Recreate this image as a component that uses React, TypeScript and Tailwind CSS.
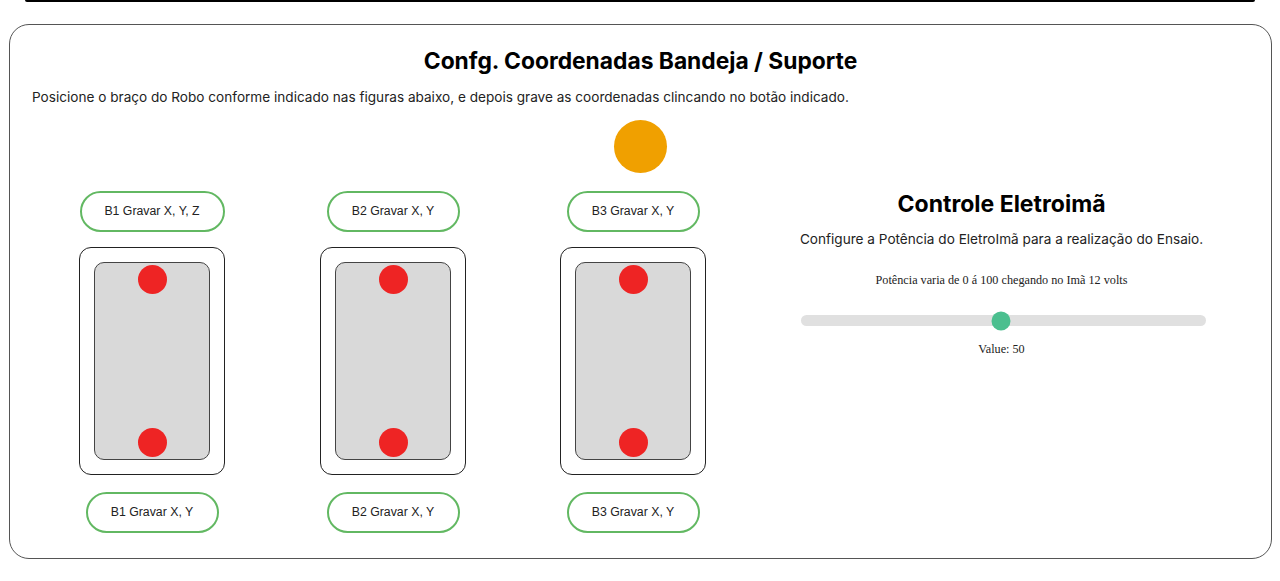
import React from 'react'

const sans = { fontFamily: 'Inter, "Noto Sans", sans-serif' }

function GravarButton({ label, wide }: { label: string; wide?: boolean }) {
  return (
    <button
      className={`${wide ? 'w-[145px]' : 'w-[133px]'} h-[41px] rounded-full border-2 border-[#62b862] bg-white text-[12.3px] text-[#222] font-['Liberation_Sans',Arial,sans-serif]`}
    >
      {label}
    </button>
  )
}

function Bandeja() {
  return (
    <div className="w-[146px] h-[228px] rounded-[12px] border border-[#222] p-[14px]">
      <div className="w-full h-full rounded-[10px] border border-[#444] bg-[#d9d9d9] flex flex-col items-center justify-between py-[2px]">
        <div className="w-[29px] h-[29px] rounded-full bg-[#ee2424]" />
        <div className="w-[29px] h-[29px] rounded-full bg-[#ee2424]" />
      </div>
    </div>
  )
}

function Coluna({ n, wideTop }: { n: number; wideTop?: boolean }) {
  return (
    <div className="w-[240px] flex flex-col items-center">
      <GravarButton label={`B${n} Gravar X, Y${wideTop ? ', Z' : ''}`} wide={wideTop} />
      <div className="mt-[15px]">
        <Bandeja />
      </div>
      <div className="mt-[17px]">
        <GravarButton label={`B${n} Gravar X, Y`} />
      </div>
    </div>
  )
}

export default function App() {
  const value = 50
  return (
    <div className="w-[1280px] h-[581px] bg-white overflow-hidden" style={sans}>
      {/* previous card bottom */}
      <div className="mx-[25px] h-[2px] border-x border-b-2 border-black rounded-b-[6px]" />

      <div className="mt-[22px] ml-[9px] mr-[8px] h-[535px] rounded-[20px] border border-[#555] pl-[22px] pt-[22px]">
        <h2 className="text-center text-[22.8px] leading-[28px] font-bold text-black pr-[22px]">
          Confg. Coordenadas Bandeja / Suporte
        </h2>
        <p className="mt-[12px] text-[13.6px] leading-[20px] text-[#222]">
          Posicione o braço do Robo conforme indicado nas figuras abaixo, e depois grave as coordenadas clincando no botão indicado.
        </p>

        <div className="flex justify-center pr-[22px] mt-[13px]">
          <div className="w-[53px] h-[53px] rounded-full bg-[#f0a000]" />
        </div>

        <div className="flex mt-[18px]">
          <Coluna n={1} wideTop />
          <div className="pl-[1px]">
            <Coluna n={2} />
          </div>
          <Coluna n={3} />

          <div className="w-[497px] flex flex-col items-center">
            <h3 className="text-[23px] leading-[26px] font-bold text-black">Controle Eletroimã</h3>
            <p className="mt-[12px] text-[13.6px] leading-[20px] text-[#222]">
              Configure a Potência do EletroImã para a realização do Ensaio.
            </p>
            <p className="mt-[23px] text-[12.2px] leading-[16px] text-[#222] font-['Liberation_Serif','Times_New_Roman',serif]">
              Potência varia de 0 á 100 chegando no Imã 12 volts
            </p>
            <div className="relative mt-[27px] w-[405px] h-[11px] rounded-full bg-[#e0e0e0] ml-[3px]">
              <div
                className="absolute top-1/2 w-[19px] h-[19px] -translate-x-1/2 -translate-y-1/2 rounded-full bg-[#4bbf8f]"
                style={{ left: `calc(${value}% - 2px)` }}
              />
            </div>
            <p className="mt-[15px] text-[12.2px] leading-[16px] text-[#222] font-['Liberation_Serif','Times_New_Roman',serif]">
              Value: {value}
            </p>
          </div>
        </div>
      </div>
    </div>
  )
}
